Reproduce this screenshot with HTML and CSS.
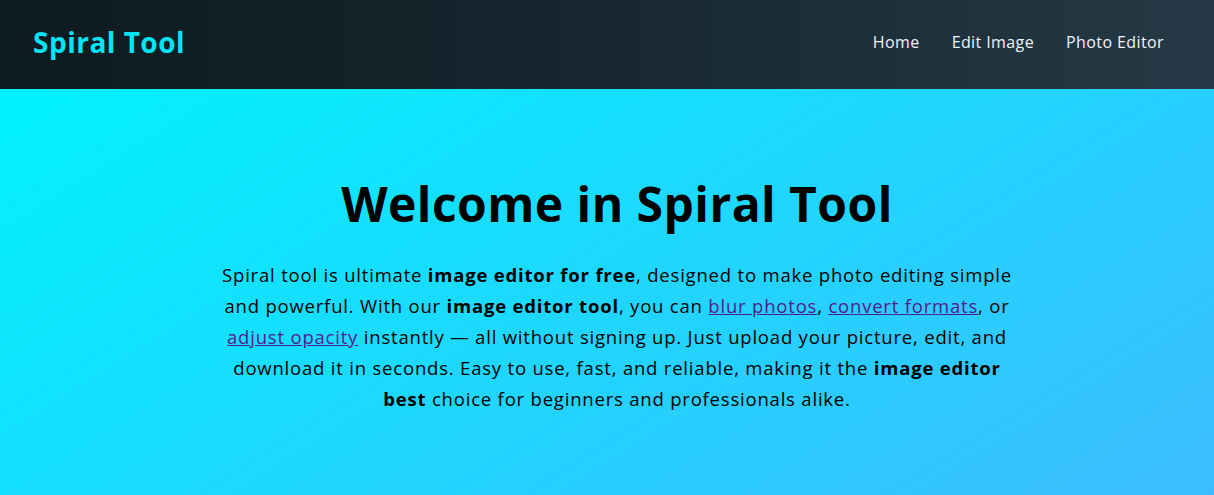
FILE: index.html
```html
<!DOCTYPE html>
<html lang="en">
<head>
<meta charset="utf-8">
<title>Spiral Tool</title>
<link rel="stylesheet" href="styles.css">
</head>
<body>
<header class="site-header">
  <a class="logo" href="#">Spiral Tool</a>
  <nav class="nav">
    <a href="#">Home</a>
    <a href="#">Edit Image</a>
    <a href="#">Photo Editor</a>
  </nav>
</header>
<section class="hero">
  <h1 class="hero-title">Welcome in Spiral Tool</h1>
  <p class="hero-text">Spiral tool is ultimate <strong>image editor for free</strong>, designed to make photo editing simple and powerful. With our <strong>image editor tool</strong>, you can <a href="#">blur photos</a>, <a href="#">convert formats</a>, or <a href="#">adjust opacity</a> instantly — all without signing up. Just upload your picture, edit, and download it in seconds. Easy to use, fast, and reliable, making it the <strong>image editor best</strong> choice for beginners and professionals alike.</p>
</section>
</body>
</html>
```

FILE: styles.css
```css
* { box-sizing: border-box; }
html, body { margin: 0; padding: 0; }
body {
  font-family: "Open Sans", "DejaVu Sans", sans-serif;
  color: #000;
  background: #20d0fe;
}
.site-header {
  height: 89px;
  display: flex;
  align-items: center;
  justify-content: space-between;
  padding: 0 50px 6px 33px;
  background: linear-gradient(90deg, #0d1a20 0%, #16262e 45%, #253a46 100%);
}
.logo {
  color: #00e5f5;
  font-size: 28px;
  font-weight: 700;
  text-decoration: none;
  letter-spacing: 0.5px;
}
.nav { display: flex; gap: 32px; }
.nav a {
  color: #f1f4f6;
  font-size: 16px;
  font-weight: 500;
  text-decoration: none;
  letter-spacing: 0.4px;
}
.hero {
  padding: 86px 0 60px 20px;
  text-align: center;
  background: linear-gradient(to bottom right, #00f2fe 0%, #4facfe 100%);
  min-height: 760px;
}
.hero-title {
  margin: 0 0 26px;
  font-size: 48px;
  font-weight: 700;
  line-height: 1.2;
  letter-spacing: 0.45px;
}
.hero-text {
  max-width: 802px;
  margin: 0 auto;
  font-size: 18.5px;
  line-height: 31px;
  letter-spacing: 0.8px;
}
.hero-text strong { font-weight: 700; }
.hero-text a { color: #551a8b; text-decoration: underline; }
```
